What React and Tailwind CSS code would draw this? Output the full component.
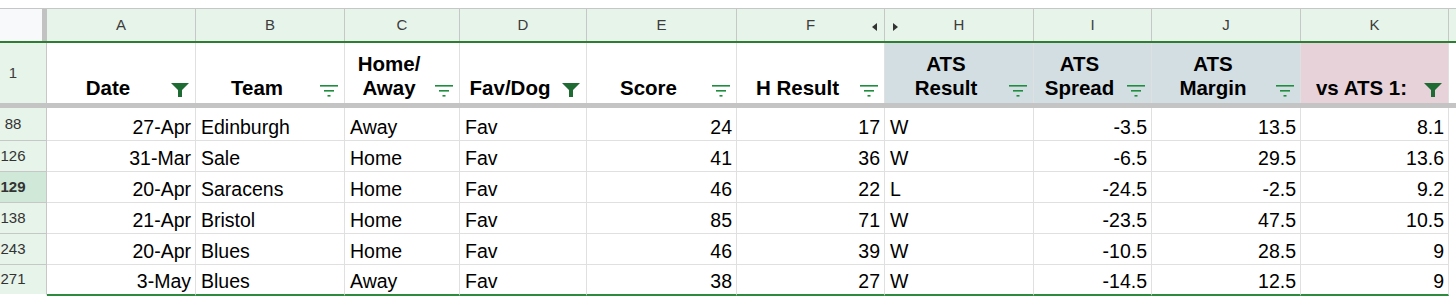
import React from 'react';

const columns = [
  { letter: 'A', width: 'w-[149px]', title: ['Date'], filter: 'on', align: 'right', bg: 'bg-white' },
  { letter: 'B', width: 'w-[149px]', title: ['Team'], filter: 'off', align: 'left', bg: 'bg-white' },
  { letter: 'C', width: 'w-[115px]', title: ['Home/', 'Away'], filter: 'off', align: 'left', bg: 'bg-white' },
  { letter: 'D', width: 'w-[127px]', title: ['Fav/Dog'], filter: 'on', align: 'left', bg: 'bg-white' },
  { letter: 'E', width: 'w-[150px]', title: ['Score'], filter: 'off', align: 'right', bg: 'bg-white' },
  { letter: 'F', width: 'w-[148px]', title: ['H Result'], filter: 'off', align: 'right', bg: 'bg-white', hiddenRight: true },
  { letter: 'H', width: 'w-[149px]', title: ['ATS', 'Result'], filter: 'off', align: 'left', bg: 'bg-[#d3dee3]', hiddenLeft: true },
  { letter: 'I', width: 'w-[118px]', title: ['ATS', 'Spread'], filter: 'off', align: 'right', bg: 'bg-[#d3dee3]' },
  { letter: 'J', width: 'w-[149px]', title: ['ATS', 'Margin'], filter: 'off', align: 'right', bg: 'bg-[#d3dee3]' },
  { letter: 'K', width: 'w-[148px]', title: ['vs ATS 1:'], filter: 'on', align: 'right', bg: 'bg-[#e7d2da]' },
];

const rows = [
  { n: '88', h: 'h-[33px]', cells: ['27-Apr', 'Edinburgh', 'Away', 'Fav', '24', '17', 'W', '-3.5', '13.5', '8.1'] },
  { n: '126', h: 'h-[31px]', cells: ['31-Mar', 'Sale', 'Home', 'Fav', '41', '36', 'W', '-6.5', '29.5', '13.6'] },
  { n: '129', h: 'h-[31px]', active: true, cells: ['20-Apr', 'Saracens', 'Home', 'Fav', '46', '22', 'L', '-24.5', '-2.5', '9.2'] },
  { n: '138', h: 'h-[31px]', cells: ['21-Apr', 'Bristol', 'Home', 'Fav', '85', '71', 'W', '-23.5', '47.5', '10.5'] },
  { n: '243', h: 'h-[31px]', cells: ['20-Apr', 'Blues', 'Home', 'Fav', '46', '39', 'W', '-10.5', '28.5', '9'] },
  { n: '271', h: 'h-[31px]', last: true, cells: ['3-May', 'Blues', 'Away', 'Fav', '38', '27', 'W', '-14.5', '12.5', '9'] },
];

function FilterOn() {
  return (
    <svg width="18" height="14" viewBox="0 0 18 14">
      <path d="M0 0H18L11 7V14H7V7Z" fill="#1e6b34" />
    </svg>
  );
}

function FilterOff() {
  return (
    <svg width="18" height="12" viewBox="0 0 18 12">
      <rect x="0" y="0" width="18" height="1.6" fill="#1e8e3e" />
      <rect x="4" y="5" width="10" height="1.6" fill="#1e8e3e" />
      <rect x="7.5" y="10" width="3" height="1.6" fill="#1e8e3e" />
    </svg>
  );
}

export default function App() {
  return (
    <div className="h-[300px] w-[1456px] overflow-hidden bg-white font-['Liberation_Sans',Arial,sans-serif] text-black">
      <div className="h-[8px]" />

      {/* column letters */}
      <div className="flex h-[35px] border-t border-b-2 border-t-[#c4c7c5] border-b-[#2e7d32] bg-[#e6f4ea]">
        <div className="w-[42px] bg-[#f8f9fa]" />
        <div className="w-[5px] bg-[#c2c2c2]" />
        {columns.map((c) => (
          <div
            key={c.letter}
            className={`${c.width} relative flex shrink-0 items-center justify-center border-r border-[#c7c7c7] text-[15px] text-[#3c3c3c]`}
          >
            {c.letter}
            {c.hiddenRight ? (
              <span className="absolute right-[7px] top-[14px] h-0 w-0 border-y-[4px] border-r-[5px] border-y-transparent border-r-[#333]" />
            ) : null}
            {c.hiddenLeft ? (
              <span className="absolute left-[8px] top-[14px] h-0 w-0 border-y-[4px] border-l-[5px] border-y-transparent border-l-[#333]" />
            ) : null}
          </div>
        ))}
      </div>

      {/* header row 1 */}
      <div className="flex h-[60px]">
        <div className="flex w-[47px] shrink-0 items-center border-r border-[#c7c7c7] bg-[#e6f4ea]">
          <span className="w-[26px] text-center text-[15px] text-[#3c3c3c]">1</span>
        </div>
        {columns.map((c) => (
          <div key={c.letter} className={`${c.width} ${c.bg} flex shrink-0 items-end border-r border-[#e0e0e0]`}>
            <div className="flex-1 pb-[3px] text-center text-[20.5px] font-bold leading-[24px]">
              {c.title.map((t) => (
                <div key={t}>{t}</div>
              ))}
            </div>
            <div className="flex w-[26px] shrink-0 justify-start pb-[6px] pl-[2px]">
              {c.filter === 'on' ? <FilterOn /> : <FilterOff />}
            </div>
          </div>
        ))}
      </div>

      {/* freeze bar */}
      <div className="h-[5px] bg-[#c4c4c4]" />

      {rows.map((r) => (
        <div key={r.n} className={`flex ${r.h}`}>
          <div
            className={`flex w-[47px] shrink-0 items-center border-r border-[#c7c7c7] ${r.last ? 'border-b-2 border-b-white' : 'border-b border-b-[#c7c7c7]'} ${r.active ? 'bg-[#cfe8d7] font-bold' : 'bg-[#e6f4ea]'}`}
          >
            <span className="w-[26px] text-center text-[15px] text-[#333]">{r.n}</span>
          </div>
          {columns.map((c, i) => (
            <div
              key={c.letter}
              className={`${c.width} flex shrink-0 items-end border-r border-[#e0e0e0] px-[4px] pb-[2px] text-[19.5px] leading-[22px] ${r.last ? 'border-b-2 border-b-[#2e8b3e]' : 'border-b border-b-[#e0e0e0]'} ${c.align === 'right' ? 'justify-end' : 'justify-start pl-[5px]'}`}
            >
              {r.cells[i]}
            </div>
          ))}
        </div>
      ))}
    </div>
  );
}
